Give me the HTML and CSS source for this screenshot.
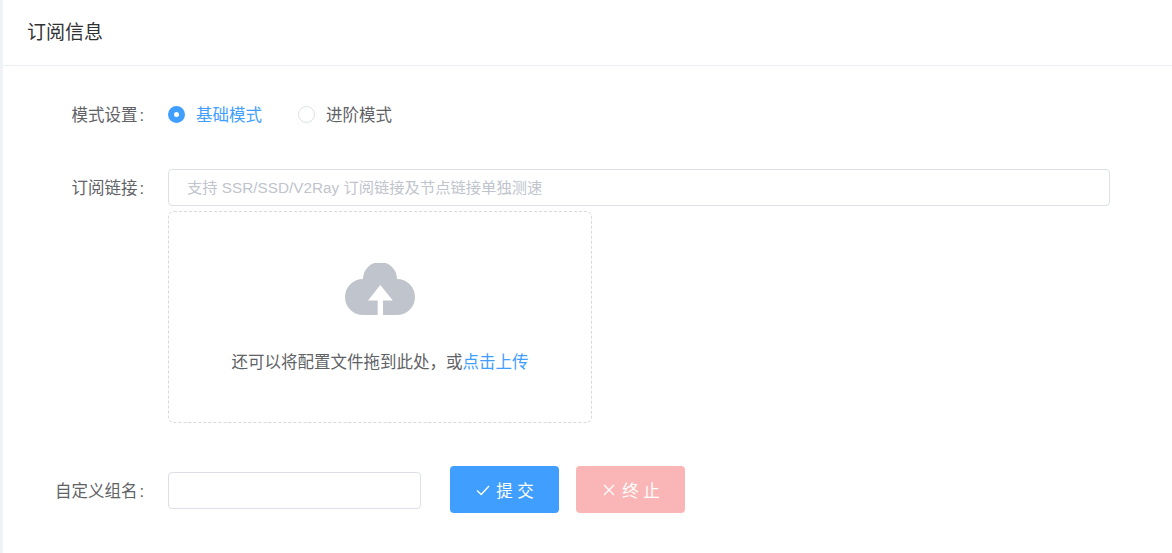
FILE: index.html
```html
<!DOCTYPE html>
<html lang="zh-CN">
<head>
<meta charset="utf-8">
<title>订阅信息</title>
<link rel="stylesheet" href="styles.css">
</head>
<body>
<main class="card">
  <header class="card-header">订阅信息</header>
  <form class="form">
    <div class="row row-mode">
      <div class="label">模式设置<span class="colon">:</span></div>
      <div class="radios">
        <label class="radio radio-on"><span class="dot"></span><span>基础模式</span></label>
        <label class="radio"><span class="dot"></span><span>进阶模式</span></label>
      </div>
    </div>
    <div class="row row-link">
      <div class="label label-input">订阅链接<span class="colon">:</span></div>
      <div class="control">
        <input class="input input-wide" type="text" placeholder="支持 SSR/SSD/V2Ray 订阅链接及节点链接单独测速">
        <div class="upload">
          <svg class="cloud" width="70" height="52" viewBox="0 0 70 52" aria-hidden="true">
            <path fill="#c0c4cc" d="M18 52A18 18 0 0 1 18 16A17 17 0 0 1 52 16A18 18 0 0 1 52 52Z"/>
            <path fill="#fff" d="M35.300 22L47.800 37.500H38V52H32.700V37.500H23Z"/>
          </svg>
          <p class="upload-text">还可以将配置文件拖到此处&#xFF0C;或<em>点击上传</em></p>
        </div>
      </div>
    </div>
    <div class="row row-group">
      <div class="label">自定义组名<span class="colon">:</span></div>
      <input class="input input-name" type="text">
      <button class="btn btn-submit" type="button">
        <svg width="14" height="14" viewBox="0 0 14 14" aria-hidden="true"><path d="M1 7.500L5.200 11.500L13 3" fill="none" stroke="#fff" stroke-width="1.300"/></svg>
        <span>提 交</span>
      </button>
      <button class="btn btn-stop" type="button">
        <svg width="14" height="14" viewBox="0 0 14 14" aria-hidden="true"><path d="M2 2L12 12M12 2L2 12" fill="none" stroke="#fff" stroke-width="1.300"/></svg>
        <span>终 止</span>
      </button>
    </div>
  </form>
</main>
</body>
</html>
```
FILE: styles.css
```css
* { box-sizing: border-box; }
html, body { margin: 0; height: 100%; }
body {
  background: #f0f2f5;
  font-family: "Liberation Sans", "Noto Sans CJK SC", sans-serif;
  font-size: 16.500px;
  color: #606266;
  overflow: hidden;
}
.card {
  margin-left: 3px;
  height: 100%;
  background: #fff;
}
.card-header {
  height: 66px;
  padding-left: 24px;
  border-bottom: 1px solid #ebeef5;
  font-size: 19px;
  line-height: 66px;
  color: #303133;
}
.form { padding-top: 28px; }
.row { display: flex; }
.label {
  width: 141px;
  margin-right: 24px;
  padding-top: 2px;
  text-align: right;
  line-height: 40px;
  flex: none;
}
.colon { margin-left: 2px; }
.label-input { padding-top: 1px; line-height: 37px; }
.row-mode { height: 40px; align-items: center; }
.radios { display: flex; }
.radio {
  display: flex;
  align-items: center;
  width: 130px;
}
.radio .dot {
  width: 17px;
  height: 17px;
  margin-right: 11px;
  border: 1px solid #dcdfe6;
  border-radius: 50%;
  background: #fff;
}
.radio-on { color: #409eff; }
.radio-on .dot {
  border: 6px solid #409eff;
}
.row-link { margin-top: 35px; }
.control { flex: none; }
.input {
  display: block;
  height: 37px;
  padding: 0 18px;
  border: 1px solid #dcdfe6;
  border-radius: 4px;
  background: #fff;
  font: inherit;
  font-size: 15.300px;
  color: #606266;
  outline: none;
}
.input::placeholder { color: #c0c4cc; opacity: 1; }
.input-wide { width: 942px; }
.input-name { width: 253px; flex: none; margin-top: 2px; }
.upload {
  width: 424px;
  height: 212px;
  margin-top: 5px;
  border: 1px dashed #d9d9d9;
  border-radius: 6px;
  text-align: center;
}
.cloud { display: block; margin: 51px auto 0; }
.upload-text {
  margin: 36px 0 0;
  line-height: 22px;
}
.upload-text em { font-style: normal; color: #409eff; }
.row-group {
  margin-top: 43px;
  align-items: center;
  height: 47px;
}
.btn {
  display: flex;
  align-items: center;
  justify-content: center;
  gap: 6px;
  width: 109px;
  height: 47px;
  padding: 0 0 0 1px;
  border: 0;
  border-radius: 4px;
  color: #fff;
  font: inherit;
}
.btn-submit { margin-left: 29px; background: #409eff; }
.btn-stop { margin-left: 17px; background: #fab6b6; }
```
